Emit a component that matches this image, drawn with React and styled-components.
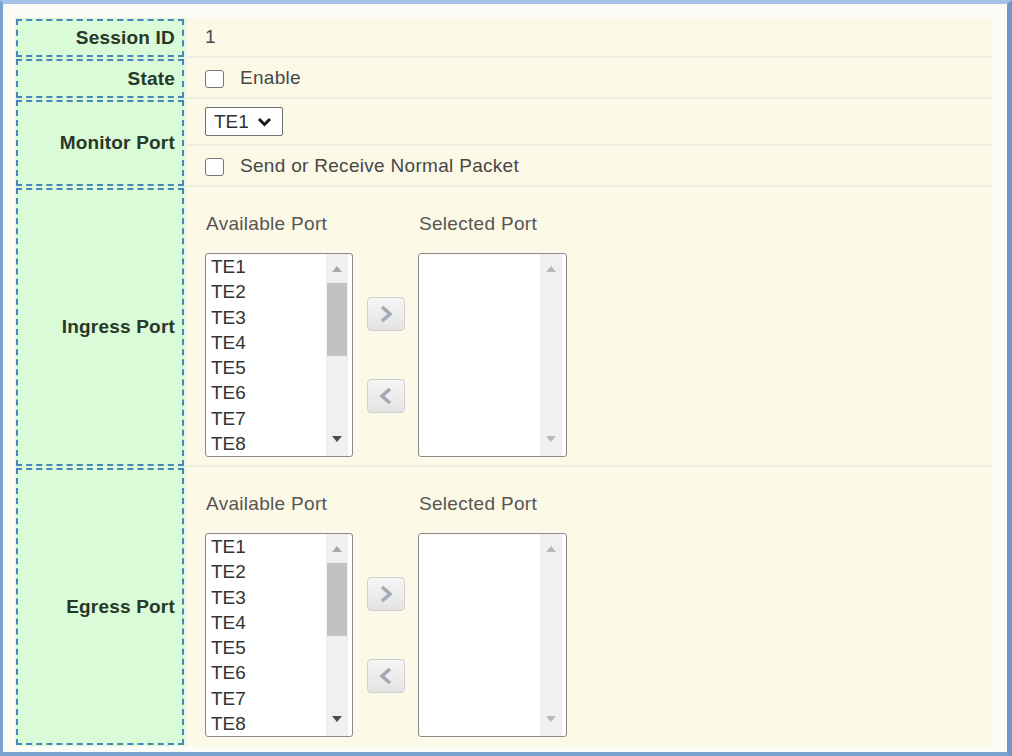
import React from 'react';
import styled, { createGlobalStyle } from 'styled-components';

const GlobalStyle = createGlobalStyle`
  html, body {
    margin: 0;
    padding: 0;
    background: #ffffff;
  }
  body {
    font-family: "Liberation Sans", Arial, sans-serif;
  }
`;

const Frame = styled.div`
  box-sizing: border-box;
  width: 1012px;
  height: 756px;
  overflow: hidden;
  border-style: solid;
  border-width: 4px 5px 4px 3px;
  border-color: #a3c2e4 #6f98c9 #7aa2d1 #7aa2d1;
  background: #fbfbf7;
  padding: 14px 15px 6px 12px;
`;

const Table = styled.div`
  display: grid;
  grid-template-columns: 170px 1fr;
  grid-template-rows: 40px 41px 88px 280px 279px;
  column-gap: 2px;
  background: #f3f1e9;
`;

const Label = styled.div`
  display: flex;
  align-items: center;
  justify-content: flex-end;
  padding-right: 10px;
  background: #d9fbd8;
  outline: 2px dashed #4a86ba;
  outline-offset: -3px;
  font-size: 19px;
  font-weight: bold;
  letter-spacing: 0.2px;
  color: #283728;
`;

const Value = styled.div`
  box-sizing: border-box;
  display: flex;
  flex-direction: column;
  justify-content: ${(p) => (p.$top ? 'flex-start' : 'center')};
  padding: ${(p) => (p.$top ? '26px 0 0 18px' : '0')};
  background: #fcf9e6;
  border-bottom: ${(p) => (p.$last ? 'none' : '2px solid #eeebe1')};
  font-size: 19px;
  letter-spacing: 0.3px;
  color: #474747;
`;

const SubRow = styled.div`
  box-sizing: border-box;
  flex: ${(p) => p.$grow || 1};
  display: flex;
  align-items: center;
  padding-left: 18px;
  border-bottom: ${(p) => (p.$divider ? '2px solid #eeebe1' : 'none')};
`;

const Check = styled.span`
  box-sizing: border-box;
  width: 19px;
  height: 18px;
  border: 1px solid #777777;
  border-radius: 3px;
  background: #ffffff;
  flex-shrink: 0;
  margin-top: 3px;
`;

const CheckText = styled.span`
  margin-left: 16px;
`;

const Select = styled.div`
  box-sizing: border-box;
  display: flex;
  align-items: center;
  gap: 8px;
  width: 78px;
  height: 29px;
  padding-left: 8px;
  border: 1px solid #707070;
  border-radius: 2px;
  background: #ffffff;
  color: #333333;
  letter-spacing: 0;
`;

const Picker = styled.div`
  display: grid;
  grid-template-columns: 148px 65px 149px;
  grid-template-rows: 22px 204px;
  row-gap: 18px;
`;

const Caption = styled.div`
  line-height: 22px;
  padding-left: 1px;
  color: #555555;
`;

const ListBox = styled.div`
  box-sizing: border-box;
  display: flex;
  height: 204px;
  padding-right: 4px;
  border: 1px solid #8a8a8a;
  border-radius: 3px;
  background: #ffffff;
  overflow: hidden;
`;

const Items = styled.div`
  flex: 1;
  padding-left: 5px;
  line-height: 25.3px;
  letter-spacing: 0;
  color: #333333;
`;

const Track = styled.div`
  display: flex;
  flex-direction: column;
  width: 22px;
  background: #f0f0f0;
`;

const ArrowCell = styled.div`
  display: flex;
  align-items: center;
  justify-content: center;
  height: ${(p) => p.$h}px;
  flex-shrink: 0;
`;

const Thumb = styled.div`
  height: 73px;
  margin: 0 1px;
  background: #c2c2c2;
`;

const Spacer = styled.div`
  flex: 1;
`;

const Moves = styled.div`
  display: flex;
  flex-direction: column;
  align-items: center;
  justify-content: center;
  gap: 48px;
`;

const MoveButton = styled.button`
  box-sizing: border-box;
  display: flex;
  align-items: center;
  justify-content: center;
  width: 38px;
  height: 34px;
  padding: 0;
  border: 1px solid #d0d0d0;
  border-radius: 4px;
  background: linear-gradient(#f6f6f6, #e3e3e3);
`;

const ports = ['TE1', 'TE2', 'TE3', 'TE4', 'TE5', 'TE6', 'TE7', 'TE8'];

function Tri({ up, color }) {
  return (
    <svg width="10" height="6" viewBox="0 0 10 6">
      <polygon points={up ? '0,6 10,6 5,0' : '0,0 10,0 5,6'} fill={color} />
    </svg>
  );
}

// arrow glyph on the move buttons
function Chevron({ dir }) {
  return (
    <svg width="16" height="20" viewBox="0 0 16 20">
      <polyline
        points={dir === 'right' ? '4,3 12,10 4,17' : '12,3 4,10 12,17'}
        fill="none"
        stroke="#a2abb5"
        strokeWidth="3.6"
      />
    </svg>
  );
}

function Scroll({ thumb }) {
  return (
    <Track>
      <ArrowCell $h={29}>
        <Tri up color={thumb ? '#a8a8a8' : '#b8b8b8'} />
      </ArrowCell>
      {thumb && <Thumb />}
      <Spacer />
      <ArrowCell $h={34}>
        <Tri color={thumb ? '#4c4c4c' : '#b8b8b8'} />
      </ArrowCell>
    </Track>
  );
}

function PortPicker() {
  return (
    <Picker>
      <Caption>Available Port</Caption>
      <div />
      <Caption>Selected Port</Caption>
      <ListBox>
        <Items>
          {ports.map((p) => (
            <div key={p}>{p}</div>
          ))}
        </Items>
        <Scroll thumb />
      </ListBox>
      <Moves>
        <MoveButton type="button">
          <Chevron dir="right" />
        </MoveButton>
        <MoveButton type="button">
          <Chevron dir="left" />
        </MoveButton>
      </Moves>
      <ListBox>
        <Items />
        <Scroll />
      </ListBox>
    </Picker>
  );
}

export default function App() {
  return (
    <Frame>
      <GlobalStyle />
      <Table>
        <Label>Session ID</Label>
        <Value>
          <SubRow>1</SubRow>
        </Value>

        <Label>State</Label>
        <Value>
          <SubRow>
            <Check />
            <CheckText>Enable</CheckText>
          </SubRow>
        </Value>

        <Label>Monitor Port</Label>
        <Value>
          <SubRow $divider $grow={47}>
            <Select>
              TE1
              <svg width="15" height="10" viewBox="0 0 15 10">
                <polyline points="2,2 7.5,7.5 13,2" fill="none" stroke="#1a1a1a" strokeWidth="3" />
              </svg>
            </Select>
          </SubRow>
          <SubRow $grow={40}>
            <Check />
            <CheckText>Send or Receive Normal Packet</CheckText>
          </SubRow>
        </Value>

        <Label>Ingress Port</Label>
        <Value $top>
          <PortPicker />
        </Value>

        <Label>Egress Port</Label>
        <Value $top $last>
          <PortPicker />
        </Value>
      </Table>
    </Frame>
  );
}
